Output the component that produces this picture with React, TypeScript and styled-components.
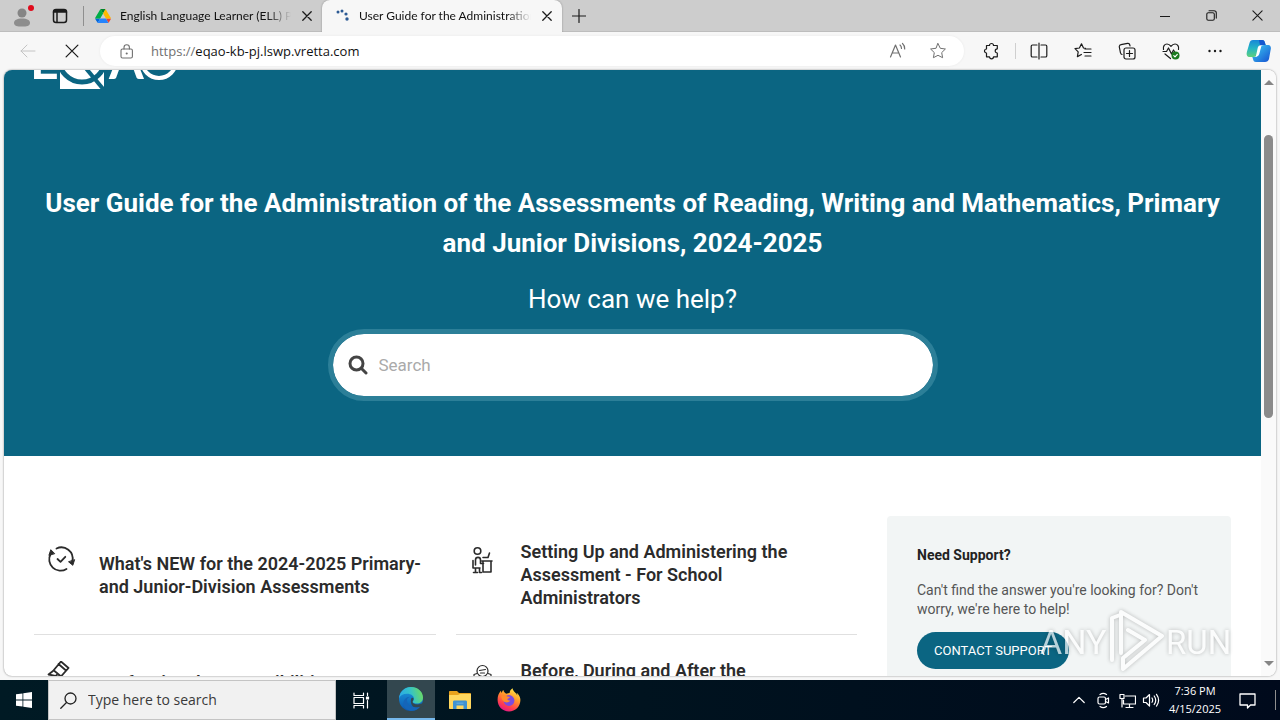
import React from "react";
import styled, { createGlobalStyle } from "styled-components";

const ui = `"Open Sans", "Noto Sans", sans-serif`;
const teal = "#0b6582";

const GlobalStyle = createGlobalStyle`
  * { box-sizing: border-box; }
  body { margin: 0; font-family: Roboto, "Open Sans", sans-serif; }
  button, input { font: inherit; }
  svg { display: block; flex: none; }
`;

const Desktop = styled.div`
  display: flex;
  flex-direction: column;
  height: 100vh;
  overflow: hidden;
  background: #f7f7f7;
`;

const IconButton = styled.button<{ $w?: number }>`
  display: flex;
  align-items: center;
  justify-content: center;
  flex: none;
  width: ${(p) => p.$w ?? 44}px;
  height: 100%;
  padding: 0;
  border: 0;
  background: none;
  color: #1b1b1b;
`;

const Spacer = styled.span<{ $w: number }>`
  flex: none;
  width: ${(p) => p.$w}px;
`;

/* Browser window: tab strip */
const TabStrip = styled.header`
  display: flex;
  flex: none;
  height: 32px;
  background: #cdcdcd;
  border-bottom: 1px solid #bdbdbd;
  font: 12px/16px Lato, ${ui};
`;

const TabDivider = styled.span`
  align-self: center;
  width: 1px;
  height: 20px;
  background: #8f8f8f;
`;

const Tab = styled.div<{ $active?: boolean }>`
  display: flex;
  align-items: center;
  gap: 9px;
  width: ${(p) => (p.$active ? 240 : 238)}px;
  height: 32px;
  padding: 0 8px 0 ${(p) => (p.$active ? 13 : 11)}px;
  border-radius: 8px 8px 0 0;
  background: ${(p) => (p.$active ? "#f7f7f7" : "transparent")};
  box-shadow: ${(p) => (p.$active ? "0 0 2px rgba(0,0,0,.35)" : "none")};
  color: #111;
`;

const TabTitle = styled.span`
  flex: 1;
  min-width: 0;
  overflow: hidden;
  white-space: nowrap;
  mask-image: linear-gradient(to right, #000 calc(100% - 24px), transparent);
`;

const WindowButtons = styled.div`
  display: flex;
  margin-left: auto;
`;

/* Browser window: address row */
const Toolbar = styled.nav`
  display: flex;
  align-items: center;
  flex: none;
  height: 38px;
  padding-left: 6px;
  background: #f7f7f7;
`;

const AddressBar = styled.div`
  display: flex;
  align-items: center;
  flex: 1;
  height: 30px;
  margin: 0 6px;
  padding: 0 6px 0 20px;
  border-radius: 15px;
  background: #fff;
  box-shadow: 0 0 3px rgba(0, 0, 0, 0.06);
  color: #707070;
`;

const Address = styled.span`
  flex: 1;
  margin-left: 16px;
  font: 13px/20px ${ui};
  b { font-weight: 400; color: #111; }
`;

const ToolDivider = styled.span`
  width: 1px;
  height: 16px;
  margin: 0 1px;
  background: #cfcfcf;
`;

/* Page area */
const Viewport = styled.div`
  display: flex;
  flex: 1;
  min-height: 0;
  margin: 0 4px 4px;
  overflow: hidden;
  border-radius: 8px;
  background: #fff;
  box-shadow: 0 0 2px rgba(0, 0, 0, 0.5);
`;

const Page = styled.main`
  flex: 1;
  min-width: 0;
`;

const Hero = styled.section`
  display: flex;
  flex-direction: column;
  align-items: center;
  padding: 0 30px 55px;
  background: ${teal};
  color: #fff;
  text-align: center;
`;

const Brand = styled.a`
  align-self: flex-start;
  display: flex;
  align-items: flex-end;
  height: 20px;
  overflow: hidden;
`;

const HeroTitle = styled.h1`
  margin: 93px 0 0;
  font-size: 26px;
  line-height: 40px;
  font-weight: 700;
`;

const HeroLead = styled.h2`
  margin: 20px 0 14px;
  font-size: 26px;
  line-height: 32px;
  font-weight: 400;
`;

const SearchBox = styled.label`
  display: flex;
  align-items: center;
  gap: 11px;
  width: 610px;
  max-width: 100%;
  height: 72px;
  padding: 0 15px;
  border: 5px solid #2c7f98;
  border-radius: 36px;
  background: #fff;
  background-clip: padding-box;
  color: #444;
`;

const SearchInput = styled.input`
  flex: 1;
  min-width: 0;
  padding: 0;
  border: 0;
  outline: 0;
  background: none;
  font-size: 17px;
  line-height: 24px;
  &::placeholder { color: #aaa; opacity: 1; }
`;

const Body = styled.div`
  display: flex;
  align-items: flex-start;
  gap: 30px;
  padding: 60px 30px 0;
`;

const Topics = styled.div`
  display: grid;
  grid-template-columns: 1fr 1fr;
  column-gap: 20px;
  flex: 1;
`;

const Topic = styled.a`
  display: flex;
  align-items: center;
  gap: 20px;
  padding: 24px 14px 25px 13px;
  border-bottom: 1px solid #e0e0e0;
  color: #2b2b2b;
  text-decoration: none;
  svg { align-self: flex-start; margin-top: 2px; }
`;

const TopicTitle = styled.h3<{ $lines: number }>`
  margin: 0;
  min-height: ${(p) => p.$lines * 23}px;
  font-size: 18px;
  line-height: 23px;
  font-weight: 600;
`;

const Support = styled.aside`
  width: 344px;
  padding: 30px 30px 40px;
  border-radius: 4px;
  background: #f2f5f5;
`;

const SupportTitle = styled.h4`
  margin: 0 0 17px;
  font-size: 14px;
  line-height: 18px;
  font-weight: 700;
  color: #222;
`;

const SupportText = styled.p`
  margin: 0 0 13px;
  font-size: 14px;
  line-height: 19px;
  color: #555;
`;

const ContactButton = styled.button`
  height: 37px;
  padding: 0 17px;
  border: 0;
  border-radius: 19px;
  background: ${teal};
  color: #fff;
  font-size: 13px;
`;

const ScrollTrack = styled.div`
  display: flex;
  flex-direction: column;
  align-items: center;
  width: 15px;
  padding: 10px 0;
  background: #fafafa;
`;

const Thumb = styled.div`
  flex: 282;
  width: 9px;
  border-radius: 5px;
  background: #8b8b8b;
`;

const Gap = styled.div<{ $grow: number }>`
  flex: ${(p) => p.$grow};
`;

const Watermark = styled.div`
  position: fixed;
  right: 46px;
  bottom: 46px;
  pointer-events: none;
  opacity: 0.7;
  filter: drop-shadow(0 0 2px rgba(0, 0, 0, 0.35));
`;

/* Windows taskbar */
const Taskbar = styled.footer`
  display: flex;
  align-items: center;
  flex: none;
  height: 40px;
  background: linear-gradient(to right, #001a24, #00131f 50%, #000a1c);
  color: #fff;
`;

const TaskButton = styled(IconButton)<{ $active?: boolean }>`
  color: #fff;
  background: ${(p) => (p.$active ? "#33474f" : "none")};
  border-bottom: ${(p) => (p.$active ? "2px solid #76b9ed" : "0")};
`;

const TaskSearch = styled.label`
  display: flex;
  align-items: center;
  gap: 11px;
  width: 288px;
  height: 100%;
  padding: 0 11px;
  border: 1px solid #c4c4c4;
  background: #f1f1f1;
  color: #222;
  input {
    flex: 1;
    min-width: 0;
    padding: 0;
    border: 0;
    outline: 0;
    background: none;
    font: 14px/20px ${ui};
  }
  input::placeholder { color: #3a3a3a; opacity: 1; }
`;

const Tray = styled.div`
  display: flex;
  align-items: center;
  height: 100%;
  margin-left: auto;
`;

const Clock = styled.time`
  width: 64px;
  text-align: center;
  font: 11px/18px ${ui};
`;

type IconProps = { size?: number; w?: number; children: React.ReactNode; box?: string };
const Icon = ({ size = 18, w = 1.2, box = "0 0 18 18", children }: IconProps) => (
  <svg width={size} height={size} viewBox={box} fill="none" stroke="currentColor" strokeWidth={w} strokeLinecap="round" strokeLinejoin="round" aria-hidden="true">
    {children}
  </svg>
);

const CloseIcon = ({ size = 10, w = 1.3 }) => (
  <Icon size={size} w={w} box="0 0 10 10"><path d="M.8.8l8.400 8.400M9.200.8L.8 9.200" /></Icon>
);

const DriveLogo = () => (
  <svg width="16" height="14" viewBox="0 0 87 78" aria-hidden="true">
    <path fill="#0066da" d="M7 67l4 6c1 2 2 3 4 4l13-24H0c0 2 1 3 2 5z" />
    <path fill="#00ac47" d="M44 25L30 1c-2 1-3 2-4 4L1 48c-1 2-1 3-1 5h28z" />
    <path fill="#ea4335" d="M73 77c2-1 3-2 4-4l2-3 7-12c1-2 1-3 1-5H60l6 11z" />
    <path fill="#00832d" d="M44 25L57 1c-1-1-3-1-4-1H34c-2 0-3 0-4 1z" />
    <path fill="#2684fc" d="M60 53H28L14 77c1 1 3 1 5 1h50c2 0 3 0 4-1z" />
    <path fill="#ffba00" d="M73 27L61 5c-1-2-2-3-4-4L44 25l16 28h27c0-2 0-3-1-5z" />
  </svg>
);

const star = "M9 1.6l2.3 4.7 5.1.7-3.7 3.6.9 5.1L9 13.3l-4.6 2.4.9-5.1L1.6 7l5.1-.7z";

const CopilotLogo = () => (
  <svg width="26" height="24" viewBox="0 0 26 24" aria-hidden="true">
    <defs>
      <linearGradient id="cpA" x1="0" y1="0" x2="0" y2="1"><stop offset="0" stopColor="#1787d8" /><stop offset=".5" stopColor="#25b6c4" /><stop offset="1" stopColor="#5fd07c" /></linearGradient>
      <linearGradient id="cpB" x1="0" y1="0" x2="1" y2="1"><stop offset="0" stopColor="#3ed0f5" /><stop offset="1" stopColor="#1550d0" /></linearGradient>
    </defs>
    <path fill="url(#cpA)" d="M7 1h9c2 0 2.600 1.200 3 3l.7 2h-3c-2 0-3 1-3.600 3l-2 6c-.6 2-1.600 3-3.600 3H4C1 18 0 16 1 12.500L3.500 4C4 2 5 1 7 1z" />
    <path fill="url(#cpB)" d="M19 23h-9c-2 0-2.600-1.200-3-3l-.7-2h2.500c2 0 3-1 3.600-3l2-6c.6-2 1.600-3 3.600-3h3.500c3 0 4 2 3 5.500L23 20c-.6 2-2 3-4 3z" />
    <path fill="#1457cf" d="M13 1h3c2 0 2.600 1.200 3 3l.7 2h-3c-1 0-2 .4-2.600 1z" />
    <path fill="#fff" d="M11.800 8.500C12.500 6.700 13.700 6 15.500 6.200L13.800 13c-.6 3-1.600 4.600-4 4.700z" />
  </svg>
);

const EdgeLogo = () => (
  <svg width="26" height="26" viewBox="0 0 26 26" aria-hidden="true">
    <defs>
      <linearGradient id="edA" x1="0" y1=".5" x2="1" y2=".3"><stop offset="0" stopColor="#2aa9e8" /><stop offset=".5" stopColor="#35c3c8" /><stop offset="1" stopColor="#6fdc5c" /></linearGradient>
      <linearGradient id="edB" x1="0" y1="0" x2="0" y2="1"><stop offset="0" stopColor="#1c9bde" /><stop offset="1" stopColor="#0b57b0" /></linearGradient>
    </defs>
    <circle cx="13" cy="13" r="12" fill="url(#edB)" />
    <path fill="#33474f" d="M13 13.500c0-2 2-2.500 2.500-1 .4 1.500-1 2.500-.8 3.700.5 2 4.500 3.300 9 1.200l2.500-1v3l-3.500 2.600c-5 2-11-2-9.700-8.500z" />
    <path fill="#1565b8" d="M9 14c0 5.500 5 8.500 13.200 6.700C17 27 7.500 25.500 5.500 19 4.500 14.500 8 10.800 12 10.700 10 11.500 9 12.500 9 14z" />
    <path fill="url(#edA)" d="M1 12.500C1.500 5.500 7 1 13 1c7 0 12 5 12 10.500 0 4-3 6-6 6-2.500 0-4.300-.6-4.300-1.500 0-.7 1.300-1.300 1.300-3.200 0-2.800-3-5-6.800-5C5 7.800 2 9.500 1 12.500z" />
  </svg>
);

const FolderLogo = () => (
  <svg width="22" height="20" viewBox="0 0 22 20" aria-hidden="true">
    <path fill="#e8a21c" d="M0 2c0-.6.400-1 1-1h7l2 2h11c.6 0 1 .4 1 1v5H0z" />
    <path fill="#ffd75e" d="M0 5h9l2-1h11v14c0 .6-.4 1-1 1H1c-.6 0-1-.4-1-1z" />
    <path fill="#3f93d2" d="M4 19v-7c0-1 .5-1.500 1.500-1.500h11c1 0 1.500.5 1.500 1.500v7h-3.500v-3.500h-7V19z" />
    <path fill="#5aa7dd" d="M7.500 12.500h7v1.500h-7z" />
  </svg>
);

const FirefoxLogo = () => (
  <svg width="24" height="24" viewBox="0 0 24 24" aria-hidden="true">
    <defs>
      <linearGradient id="ffA" x1=".8" y1="0" x2=".3" y2="1"><stop offset="0" stopColor="#fff04a" /><stop offset=".4" stopColor="#ff9a2a" /><stop offset=".75" stopColor="#ff3f4d" /><stop offset="1" stopColor="#e3148a" /></linearGradient>
    </defs>
    <path fill="url(#ffA)" d="M22.800 9c-.7-1.800-2-3.400-3.200-4 .4.900.7 1.800.8 2.500C19 4.500 16 3.500 15.600.2c-1.800 1-3 3-3 4.700-1.200.1-2.200.4-3 .8C8 5.300 6.500 3.800 6.400 2 5.500 2.600 5 3.700 4.900 5c-.6-.5-.9-1.200-1-2.200C1.500 5.500.5 8.500.6 12c0 6.500 5 11.500 11.400 11.500S23.400 18.500 23.400 12c0-1-.2-2-.6-3z" />
    <circle cx="12" cy="12.500" r="5.400" fill="#7a4be0" />
    <path fill="#ff8b2b" d="M4.500 7.500c2.300-.8 4.300-.3 5.500.9 1.300 0 2.700.2 2.900.6-.2 1-1.800 1.500-2.500 2 0 1.700 2.200 1.500 3 1.500-1 1.800-3.600 2.400-5.800 1.400C5.200 12.700 4 10 4.500 7.500z" />
  </svg>
);

const EqaoLogo = () => (
  <svg width="144" height="54" viewBox="0 0 144 54" fill="#fff" role="img" aria-label="EQAO">
    <text x="-4" y="43" fontFamily="Lato, sans-serif" fontSize="50" fontWeight="700">E</text>
    <text x="75" y="43" fontFamily="Lato, sans-serif" fontSize="50" fontWeight="700">A</text>
    <circle cx="125" cy="25" r="17" fill="none" stroke="#fff" strokeWidth="4" />
    <path d="M26 8h44v45H26z" />
    <circle cx="48" cy="23" r="23" fill="none" stroke={teal} strokeWidth="5" />
    <path d="M50 30l20 24" stroke={teal} strokeWidth="4" />
  </svg>
);

const App = () => (
  <Desktop>
    <GlobalStyle />
    <TabStrip>
      <IconButton $w={44} aria-label="Profile">
        <svg width="24" height="24" viewBox="0 0 24 24">
          <circle cx="12" cy="9" r="4.500" fill="#858585" />
          <path d="M4 19c0-3 3-4.500 8-4.500s8 1.500 8 4.500-3.500 3.500-8 3.500S4 22 4 19z" fill="#8d8d8d" />
          <circle cx="21" cy="4" r="3" fill="#e00b1c" />
        </svg>
      </IconButton>
      <IconButton $w={32} aria-label="Tab actions">
        <Icon size={16} w={1.5} box="0 0 16 16"><rect x="1.500" y="1.500" width="13" height="13" rx="2.500" /><path d="M1.500 4h13M2 2.800h12M5 5v9" /></Icon>
      </IconButton>
      <Spacer $w={7} />
      <TabDivider />
      <Tab>
        <DriveLogo />
        <TabTitle>English Language Learner (ELL) Program</TabTitle>
        <IconButton $w={14} aria-label="Close tab"><CloseIcon /></IconButton>
      </Tab>
      <Tab $active>
        <svg width="15" height="15" viewBox="0 0 15 15" fill="#2c5a94"><circle cx="3" cy="3" r="1.500" /><circle cx="7" cy="2" r="1.500" /><circle cx="11" cy="5" r="1.600" /><circle cx="12" cy="10" r="1.700" /></svg>
        <TabTitle>User Guide for the Administration of</TabTitle>
        <IconButton $w={14} aria-label="Close tab"><CloseIcon /></IconButton>
      </Tab>
      <IconButton $w={34} aria-label="New tab"><Icon size={14} box="0 0 14 14"><path d="M7 .5v13M.5 7h13" /></Icon></IconButton>
      <WindowButtons>
        <IconButton $w={46} aria-label="Minimize"><Icon size={10} w={1} box="0 0 10 10"><path d="M0 5.500h10" /></Icon></IconButton>
        <IconButton $w={46} aria-label="Restore"><Icon size={11} w={1.1} box="0 0 11 11"><rect x=".8" y="2.800" width="7.500" height="7.500" rx="1.500" /><path d="M3 .8h5a2.300 2.300 0 0 1 2.300 2.300v5" /></Icon></IconButton>
        <IconButton $w={46} aria-label="Close"><CloseIcon size={11} w={1} /></IconButton>
      </WindowButtons>
    </TabStrip>

    <Toolbar>
      <IconButton aria-label="Back"><Icon size={16} w={1} box="0 0 16 16"><path stroke="#c4c4c4" d="M15 8H1M7 2L1 8l6 6" /></Icon></IconButton>
      <IconButton aria-label="Stop"><CloseIcon size={14} w={0.9} /></IconButton>
      <AddressBar>
        <Icon size={15} w={1.1} box="0 0 15 15"><rect x="1" y="5" width="11.400" height="9" rx="1.500" /><path d="M4 5V3.500a2.700 2.700 0 0 1 5.400 0V5" /><circle cx="6.700" cy="9.500" r=".5" fill="currentColor" /></Icon>
        <Address>https://<b>eqao-kb-pj.lswp.vretta.com</b></Address>
        <IconButton $w={40} aria-label="Read aloud">
          <Icon><path stroke="#707070" d="M1.500 15L6.500 3l5 12M3.300 11h6.400M11 3c1 .8 1.500 2 1.500 3.500M13.500 1.500c1.500 1.300 2.200 3 2.200 5.500" /></Icon>
        </IconButton>
        <IconButton $w={40} aria-label="Add to favorites"><Icon w={1}><path stroke="#707070" d={star} /></Icon></IconButton>
      </AddressBar>
      <IconButton aria-label="Extensions">
        <Icon><path d="M3.500 3.500h3a2 2 0 1 1 4 0h3.800v3.300a1.800 1.800 0 0 0 0 4.200v3.800h-3.800a2 2 0 0 1-4 0h-3V11a2 2 0 1 1 0-4z" /></Icon>
      </IconButton>
      <ToolDivider />
      <IconButton aria-label="Split screen">
        <Icon><path d="M7 3H2.500A1.300 1.300 0 0 0 1.200 4.300v9.400A1.300 1.300 0 0 0 2.500 15H7M11 3h4.500a1.300 1.300 0 0 1 1.300 1.300v9.400a1.300 1.300 0 0 1-1.300 1.300H11M9 1v16" /></Icon>
      </IconButton>
      <IconButton aria-label="Favorites">
        <Icon><path d="M11.500 6.300L9.500 6 7.500 1.800 5.400 6 1 6.700l3.200 3.200-.8 4.700 4-2.100M11 7h6M10 10.500h7M11 14h6" /></Icon>
      </IconButton>
      <IconButton aria-label="Collections">
        <Icon><rect x="6" y="6" width="11" height="11" rx="2" /><path d="M11.500 8.500v6M8.500 11.500h6M4 12.500a2 2 0 0 1-1.500-1.700L1.300 5A2 2 0 0 1 3 2.700l6.500-1.300A2 2 0 0 1 11.800 3l.2.800" /></Icon>
      </IconButton>
      <IconButton aria-label="Browser essentials">
        <Icon><path d="M1.500 7.500C.8 4.500 2.500 2 5 2c1.800 0 3 1 4 2.300C10 3 11.200 2 13 2c2.500 0 4.200 2.500 3.500 5.500M1 9.500h3.500L6.500 6l3 6 2-4 1 1.500M3 12l5.500 4.500" /><circle cx="13.500" cy="13.500" r="4" fill="#1a7a1f" stroke="none" /><path stroke="#fff" d="M11.800 13.600l1.200 1.200 2.300-2.400" /></Icon>
      </IconButton>
      <IconButton aria-label="Settings and more">
        <Icon><g fill="currentColor" stroke="none"><circle cx="3.500" cy="9" r="1.200" /><circle cx="9" cy="9" r="1.200" /><circle cx="14.500" cy="9" r="1.200" /></g></Icon>
      </IconButton>
      <IconButton $w={43} aria-label="Copilot"><CopilotLogo /></IconButton>
    </Toolbar>

    <Viewport>
      <Page>
        <Hero>
          <Brand href="#"><EqaoLogo /></Brand>
          <HeroTitle>User Guide for the Administration of the Assessments of Reading, Writing and Mathematics, Primary and Junior Divisions, 2024-2025</HeroTitle>
          <HeroLead>How can we help?</HeroLead>
          <SearchBox>
            <Icon size={20} w={3} box="0 0 20 20"><circle cx="8.500" cy="8.500" r="6.500" /><path d="M13.500 13.500l4.500 4.500" /></Icon>
            <SearchInput type="search" placeholder="Search" aria-label="Search" />
          </SearchBox>
        </Hero>
        <Body>
          <Topics>
            <Topic href="#">
              <Icon size={32} w={1.8} box="0 0 32 32">
                <path d="M9.500 6.500A11.300 11.300 0 0 1 25.400 19M3.600 12A11.300 11.300 0 0 0 19.500 27M10.500 17l3 2.800 4.800-5" />
                <path fill="currentColor" strokeWidth="1" d="M2 13l1.800-5.300 3.700 3.700zM27.500 18l-1.700 5.300-4-3.300z" />
              </Icon>
              <TopicTitle $lines={2}>What's NEW for the 2024-2025 Primary- and Junior-Division Assessments</TopicTitle>
            </Topic>
            <Topic href="#">
              <Icon size={32} w={1.6} box="0 0 32 32">
                <circle cx="8.500" cy="9" r="3.300" /><path d="M4 18.500V26h7M6.500 26v4.500M4.500 30.500h4M10.500 26v4.500h2M6.500 23v-5c0-3.500 5-3.500 5 0v3.500h3M14 15.500h5l1.500-4.500M13 19h10M14 19v11h8V19" />
              </Icon>
              <TopicTitle $lines={3}>Setting Up and Administering the Assessment - For School Administrators</TopicTitle>
            </Topic>
            <Topic href="#">
              <Icon size={32} w={1.8} box="0 0 32 32"><path d="M1.500 13.500L6 10l8-9.500 7.500 6.500-8 9zM11.500 3l7.500 6.500M7.500 10l6 5M9.500 14L2 22" /></Icon>
              <TopicTitle $lines={2}>Professional Responsibilities</TopicTitle>
            </Topic>
            <Topic href="#">
              <Icon size={32} w={1.2} box="0 0 32 32"><circle cx="13.500" cy="10" r="5.500" /><path d="M10.500 9.500l6-1M11.500 12h4M5 16v-2.500l3-1M22 16v-2.500l-3-1" /></Icon>
              <TopicTitle $lines={3}>Before, During and After the</TopicTitle>
            </Topic>
          </Topics>
          <Support>
            <SupportTitle>Need Support?</SupportTitle>
            <SupportText>Can't find the answer you're looking for? Don't worry, we're here to help!</SupportText>
            <ContactButton>CONTACT SUPPORT</ContactButton>
          </Support>
        </Body>
      </Page>
      <ScrollTrack>
        <svg width="10" height="5" viewBox="0 0 10 5"><path fill="#858585" d="M0 5l5-5 5 5z" /></svg>
        <Gap $grow={50} />
        <Thumb />
        <Gap $grow={242} />
        <svg width="10" height="5" viewBox="0 0 10 5"><path fill="#858585" d="M0 0h10L5 5z" /></svg>
      </ScrollTrack>
    </Viewport>

    <Taskbar>
      <TaskButton $w={48} aria-label="Start">
        <svg width="16" height="16" viewBox="0 0 16 16" fill="#fff"><path d="M0 2.300L6.500 1.400v6.200H0zM7.300 1.300L16 0v7.600H7.300zM0 8.400h6.500v6.200L0 13.700zM7.300 8.400H16V16l-8.700-1.300z" /></svg>
      </TaskButton>
      <TaskSearch>
        <Icon size={17} w={1.3} box="0 0 17 17"><circle cx="10.500" cy="6.500" r="5.500" /><path d="M6.500 10.500L.8 16.200" /></Icon>
        <input type="text" placeholder="Type here to search" aria-label="Type here to search" />
      </TaskSearch>
      <TaskButton $w={51} aria-label="Task view">
        <Icon size={17} w={1.2} box="0 0 17 17"><path d="M1 1v2.500h9.500V1M1 16v-2.500h9.500V16M1 5.500h9.500v6H1zM14.500 1v2.500M14.500 8.500V16" /><path fill="currentColor" d="M13.500 5h2v2h-2z" /></Icon>
      </TaskButton>
      <TaskButton $w={48} $active aria-label="Edge"><EdgeLogo /></TaskButton>
      <TaskButton $w={50} aria-label="File Explorer"><FolderLogo /></TaskButton>
      <TaskButton $w={48} aria-label="Firefox"><FirefoxLogo /></TaskButton>
      <Tray>
        <TaskButton $w={24} aria-label="Hidden icons"><Icon size={12} w={1.2} box="0 0 12 12"><path d="M.8 8.500L6 3.300l5.200 5.200" /></Icon></TaskButton>
        <TaskButton $w={24} aria-label="Meet now"><Icon size={17} w={1.2} box="0 0 17 17"><rect x="3" y="5" width="7.500" height="7" rx="1.500" /><path d="M10.500 7.500L13.500 6v5l-3-1.500M5 2.500c2-1.500 4.500-1.500 6.500 0M5 14.500c2 1.500 4.500 1.500 6.500 0" /></Icon></TaskButton>
        <TaskButton $w={24} aria-label="Network"><Icon size={17} w={1.2} box="0 0 17 17"><path d="M6.500 4h10v8h-12V8M7 15.500h7M10.500 12v3.500M1 2.500h4v4H1zM3 6.500V15" /></Icon></TaskButton>
        <TaskButton $w={24} aria-label="Volume"><Icon size={18} w={1.2}><path d="M1.500 7v4.500h2.500L7.500 15V3.500L4 7zM10 7c.8 1.300.8 3 0 4.300M12.200 5c1.800 2.500 1.800 6 0 8.500M14.500 3.300c2.500 3.500 2.500 8.300 0 11.800" /></Icon></TaskButton>
        <Clock>7:36 PM<br />4/15/2025</Clock>
        <TaskButton $w={40} aria-label="Notifications"><Icon size={17} w={1.3} box="0 0 17 17"><path d="M1 2h15v11h-4.500L8.500 16v-3H1z" /></Icon></TaskButton>
        <Spacer $w={8} />
        <TabDivider />
        <Spacer $w={4} />
      </Tray>
    </Taskbar>

    <Watermark>
      <svg width="196" height="66" viewBox="0 0 196 66" fill="#fff" role="img" aria-label="ANY RUN">
        <text x="2" y="46" fontFamily="Roboto, sans-serif" fontSize="34">ANY</text>
        <text x="128" y="46" fontFamily="Roboto, sans-serif" fontSize="33">RUN</text>
        <path fill="none" stroke="#fff" strokeWidth="4" strokeLinejoin="round" strokeLinecap="round" d="M74 52V10l8-3M83 45V4l41 24-39 33V50l22-18-17-10" />
      </svg>
    </Watermark>
  </Desktop>
);

export default App;
